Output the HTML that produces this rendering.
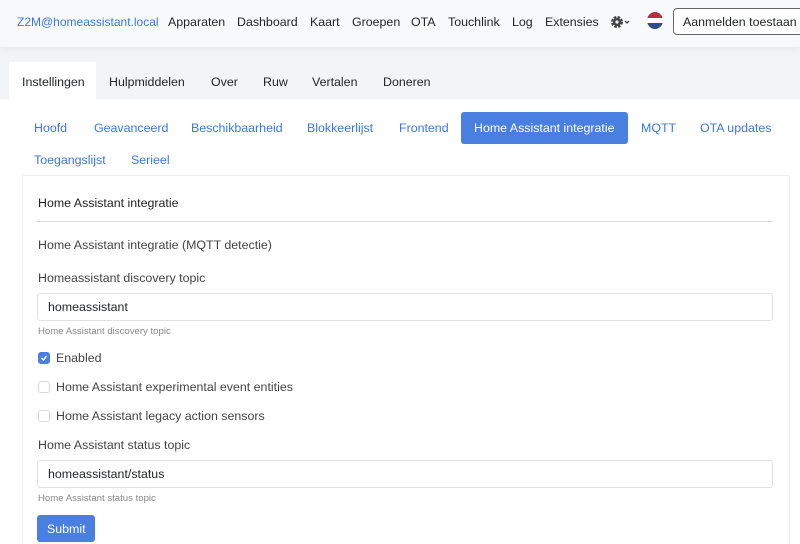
<!DOCTYPE html>
<html><head><style>
*{box-sizing:border-box}
html,body{margin:0;width:800px;height:544px;overflow:hidden}
body{position:relative;background:#f3f4f6;font-family:"Liberation Sans",Arial,sans-serif;font-size:12.4px;color:#212529}
.nav{position:absolute;left:0;top:0;width:800px;height:47px;background:#f8f9fa;box-shadow:0 2px 8px rgba(0,0,0,.06);z-index:2}
.nav span{position:absolute;top:15px;white-space:nowrap}
.brand{color:#3a78e0}
.tabs{position:absolute;top:62px;left:9px;height:38px;z-index:2}
.tab{position:absolute;top:13px;white-space:nowrap}
.content{position:absolute;left:0;top:99px;width:800px;height:445px;background:#fff}
.pill{position:absolute;color:#3a78e0;white-space:nowrap}
.card{position:absolute;left:22px;top:175px;width:768px;height:369px;background:#fff;border:1px solid #eef0f2;border-bottom:none}
.t{position:absolute;white-space:nowrap;color:#444}
input{position:absolute;left:37px;width:736px;height:28px;border:1px solid #dee2e6;border-radius:3px;font:12.4px "Liberation Sans",sans-serif;padding-left:10px;color:#212529;background:#fff}
.cb{position:absolute;left:38px;width:12px;height:12px;border:1px solid #d6d9dd;border-radius:3px;background:#fff}
.small{font-size:9.6px;color:#888}
</style></head><body>
<div class="nav">
<span class="brand" style="left:17px;font-size:12px">Z2M@homeassistant.local</span>
<span style="left:168px">Apparaten</span>
<span style="left:237px">Dashboard</span>
<span style="left:310px">Kaart</span>
<span style="left:352px">Groepen</span>
<span style="left:411px">OTA</span>
<span style="left:448px">Touchlink</span>
<span style="left:512px">Log</span>
<span style="left:545px">Extensies</span>
<svg style="position:absolute;left:610px;top:14px" width="22" height="16" viewBox="0 0 22 16"><circle cx="7" cy="8" r="4.5" fill="none" stroke="#444" stroke-width="3" stroke-dasharray="2.4 1.2"/><circle cx="7" cy="8" r="4" fill="#444"/><circle cx="7" cy="8" r="1.6" fill="#f8f9fa"/><path d="M15 7l2 2 2-2" fill="none" stroke="#444" stroke-width="1.3"/></svg>
<div style="position:absolute;left:647px;top:12px;width:16px;height:17px;border-radius:50%;overflow:hidden"><div style="height:6px;background:#b0313c"></div><div style="height:5px;background:#fff"></div><div style="height:6px;background:#2d4a8c"></div></div>
<div style="position:absolute;left:673px;top:8px;width:140px;height:27px;border:1px solid #666;border-radius:4px;background:#fff"><span style="left:9px;top:6px">Aanmelden toestaan</span></div>
</div>
<div class="content"></div>
<div style="position:absolute;left:9px;top:62px;width:87px;height:40px;background:#fff"></div>
<div class="tabs">
<span class="tab" style="left:13px">Instellingen</span>
<span class="tab" style="left:100px">Hulpmiddelen</span>
<span class="tab" style="left:202px">Over</span>
<span class="tab" style="left:254px">Ruw</span>
<span class="tab" style="left:303px">Vertalen</span>
<span class="tab" style="left:374px">Doneren</span>
</div>
<span class="pill" style="left:34px;top:121px">Hoofd</span>
<span class="pill" style="left:94px;top:121px">Geavanceerd</span>
<span class="pill" style="left:191px;top:121px">Beschikbaarheid</span>
<span class="pill" style="left:307px;top:121px">Blokkeerlijst</span>
<span class="pill" style="left:399px;top:121px">Frontend</span>
<div style="position:absolute;left:461px;top:112px;width:167px;height:32px;background:#4a7fe2;border-radius:3px;color:#fff;padding:9px 0 0 13px;white-space:nowrap">Home Assistant integratie</div>
<span class="pill" style="left:641px;top:121px">MQTT</span>
<span class="pill" style="left:700px;top:121px">OTA updates</span>
<span class="pill" style="left:34px;top:153px">Toegangslijst</span>
<span class="pill" style="left:131px;top:153px">Serieel</span>
<div class="card"></div>
<span class="t" style="left:38px;top:196px;color:#222">Home Assistant integratie</span>
<div style="position:absolute;left:37px;top:221px;width:736px;height:1px;background:#d8dadd"></div>
<span class="t" style="left:38px;top:238px">Home Assistant integratie (MQTT detectie)</span>
<span class="t" style="left:38px;top:271px">Homeassistant discovery topic</span>
<input style="top:293px" value="homeassistant">
<span class="t small" style="left:38px;top:326px">Home Assistant discovery topic</span>
<div class="cb" style="top:352px;background:#4a7fe2;border-color:#4a7fe2"><svg width="10" height="10" viewBox="0 0 10 10" style="position:absolute;left:0;top:0"><path d="M2.5 5l2 2 3-4" fill="none" stroke="#fff" stroke-width="1.4"/></svg></div>
<span class="t" style="left:56px;top:351px">Enabled</span>
<div class="cb" style="top:381px"></div>
<span class="t" style="left:56px;top:380px">Home Assistant experimental event entities</span>
<div class="cb" style="top:410px"></div>
<span class="t" style="left:56px;top:409px">Home Assistant legacy action sensors</span>
<span class="t" style="left:38px;top:438px">Home Assistant status topic</span>
<input style="top:460px" value="homeassistant/status">
<span class="t small" style="left:38px;top:493px">Home Assistant status topic</span>
<div style="position:absolute;left:37px;top:515px;width:58px;height:27px;background:#4a7fe2;border-radius:3px;color:#fff;padding:7px 0 0 10px">Submit</div>
</body></html>
